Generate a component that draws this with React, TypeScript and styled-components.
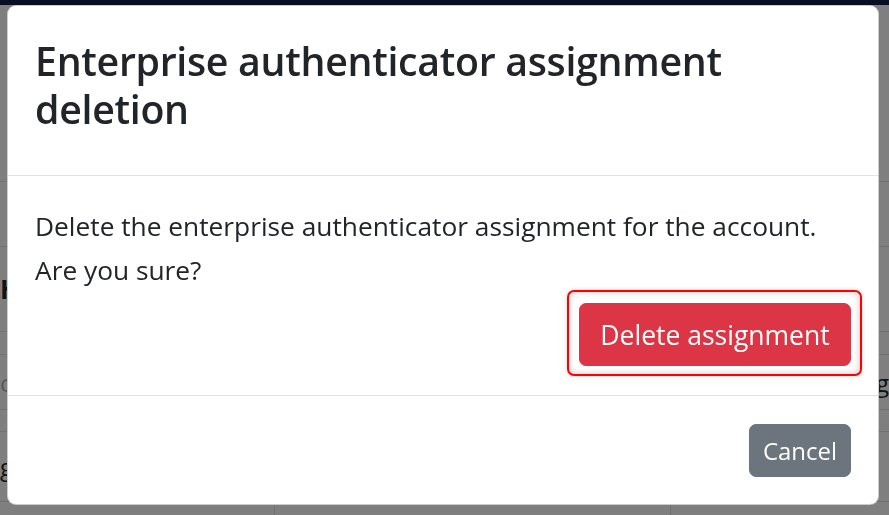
import styled, { createGlobalStyle } from "styled-components";

const GlobalStyle = createGlobalStyle`
  html, body {
    margin: 0;
    padding: 0;
    background: #ffffff;
    font-family: "Open Sans", "Noto Sans", sans-serif;
    color: #212529;
  }
  * { box-sizing: border-box; }
`;

const Page = styled.div`
  width: 889px;
  height: 515px;
  overflow: hidden;
`;

const Navbar = styled.div`
  height: 5px;
  background: #121d44;
`;

const Band = styled.div<{ $h: number }>`
  height: ${(p) => p.$h}px;
  border-bottom: 1px solid #dee2e6;
  display: flex;
  align-items: center;
  font-size: 26px;
  font-weight: 700;
`;

const Table = styled.div`
  display: grid;
  grid-template-columns: 275px 396px 1fr;
`;

const Cell = styled.div<{ $h: number; $muted?: boolean }>`
  height: ${(p) => p.$h}px;
  border-bottom: 1px solid #dee2e6;
  border-right: 1px solid #dee2e6;
  display: flex;
  align-items: center;
  font-size: 24px;
  color: ${(p) => (p.$muted ? "#adb5bd" : "#212529")};
  &:nth-child(3n) {
    border-right: none;
    justify-content: flex-end;
  }
`;

const Backdrop = styled.div`
  position: fixed;
  inset: 0;
  background: rgba(0, 0, 0, 0.5);
`;

const Modal = styled.div`
  position: fixed;
  top: 5px;
  left: 7px;
  width: 872px;
  background: #fff;
  border: 1px solid rgba(0, 0, 0, 0.2);
  border-radius: 9px;
  display: flex;
  flex-direction: column;
`;

const Header = styled.div`
  padding: 31px 27px 30px;
  border-bottom: 1px solid #dee2e6;
`;

const Title = styled.h3`
  margin: 0 0 12px;
  font-size: 39.3px;
  line-height: 48px;
  letter-spacing: -0.3px;
  font-weight: 600;
  color: #212529;
`;

const Body = styled.div`
  padding: 28px 27px 29px;
  display: flex;
  flex-direction: column;
`;

const Text = styled.p`
  margin: 0;
  font-size: 26.3px;
  line-height: 44px;
  color: #212529;
`;

const Actions = styled.div`
  display: flex;
  justify-content: flex-end;
  margin-top: 11px;
`;

const Focus = styled.div`
  position: relative;
  &::after {
    content: "";
    position: absolute;
    inset: -13px -11px -10px -12px;
    border: 2px solid #ff0000;
    border-radius: 7px;
    box-shadow: 0 0 4px rgba(0, 0, 0, 0.2), inset 0 0 7px rgba(0, 0, 0, 0.22);
    pointer-events: none;
  }
`;

const Button = styled.button<{ $variant: "danger" | "secondary"; $lg?: boolean }>`
  font-family: inherit;
  border: 1px solid ${(p) => (p.$variant === "danger" ? "#dc3545" : "#6c757d")};
  background: ${(p) => (p.$variant === "danger" ? "#dc3545" : "#6c757d")};
  color: #fff;
  border-radius: 7px;
  cursor: pointer;
  font-size: ${(p) => (p.$lg ? "26.5px" : "24px")};
  height: ${(p) => (p.$lg ? "63px" : "53px")};
  width: ${(p) => (p.$lg ? "272px" : "102px")};
  padding: 0;
  display: flex;
  align-items: center;
  justify-content: center;
`;

const Footer = styled.div`
  border-top: 1px solid #dee2e6;
  padding: 28px 27px 27px;
  display: flex;
  justify-content: flex-end;
`;

export default function App() {
  return (
    <>
      <GlobalStyle />
      <Page>
        <Navbar />
        <Band $h={177} />
        <Band $h={65} />
        <Band $h={85}>Hg</Band>
        <Table>
          <Cell $h={23} />
          <Cell $h={23} />
          <Cell $h={23} />
          <Cell $h={55} $muted>c</Cell>
          <Cell $h={55} />
          <Cell $h={55}>g</Cell>
          <Cell $h={22} />
          <Cell $h={22} />
          <Cell $h={22} />
          <Cell $h={70}>g</Cell>
          <Cell $h={70} />
          <Cell $h={70} />
          <Cell $h={60} />
          <Cell $h={60} />
          <Cell $h={60} />
        </Table>
      </Page>
      <Backdrop />
      <Modal>
        <Header>
          <Title>Enterprise authenticator assignment deletion</Title>
        </Header>
        <Body>
          <Text>
            Delete the enterprise authenticator assignment for the account.
            <br />
            Are you sure?
          </Text>
          <Actions>
            <Focus>
              <Button $variant="danger" $lg>Delete assignment</Button>
            </Focus>
          </Actions>
        </Body>
        <Footer>
          <Button $variant="secondary">Cancel</Button>
        </Footer>
      </Modal>
    </>
  );
}
